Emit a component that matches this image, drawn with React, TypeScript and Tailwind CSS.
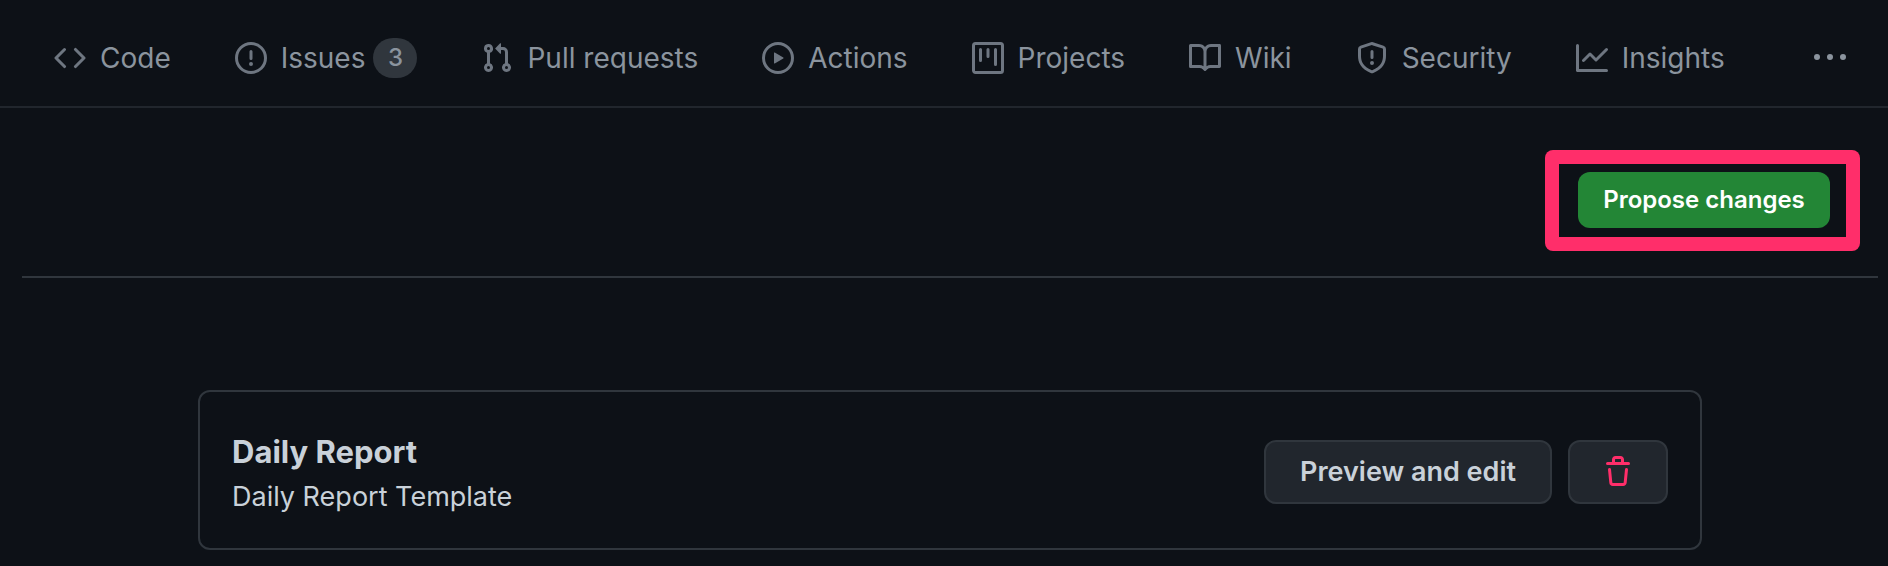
import type { ReactNode } from 'react';

interface Tab {
  label: string;
  icon: string;
  count?: number;
}

const ICONS = {
  code: 'M4.72 3.22a.75.75 0 011.06 1.06L2.06 8l3.72 3.72a.75.75 0 11-1.06 1.06L.47 8.53a.75.75 0 010-1.06l4.25-4.25zm6.56 0a.75.75 0 10-1.06 1.06L13.94 8l-3.72 3.72a.75.75 0 101.06 1.06l4.25-4.25a.75.75 0 000-1.06l-4.25-4.25z',
  issue: 'M8 1.5a6.5 6.5 0 100 13 6.5 6.5 0 000-13zM0 8a8 8 0 1116 0A8 8 0 010 8zm9 3a1 1 0 11-2 0 1 1 0 012 0zm-.25-6.25a.75.75 0 00-1.5 0v3.5a.75.75 0 001.5 0v-3.5z',
  pull: 'M7.177 3.073L9.573.677A.25.25 0 0110 .854v4.792a.25.25 0 01-.427.177L7.177 3.427a.25.25 0 010-.354zM3.75 2.5a.75.75 0 100 1.5.75.75 0 000-1.5zm-2.25.75a2.25 2.25 0 113 2.122v5.256a2.251 2.251 0 11-1.5 0V5.372A2.25 2.25 0 011.5 3.25zM11 2.5h-1V4h1a1 1 0 011 1v5.628a2.251 2.251 0 101.5 0V5A2.5 2.5 0 0011 2.5zm1 10.25a.75.75 0 111.5 0 .75.75 0 01-1.5 0zM3.75 12a.75.75 0 100 1.5.75.75 0 000-1.5z',
  play: 'M1.5 8a6.5 6.5 0 1113 0 6.5 6.5 0 01-13 0zM8 0a8 8 0 100 16A8 8 0 008 0zM6.379 5.227A.25.25 0 006 5.442v5.117a.25.25 0 00.379.214l4.264-2.559a.25.25 0 000-.428L6.379 5.227z',
  project: 'M1.75 0A1.75 1.75 0 000 1.75v12.5C0 15.216.784 16 1.75 16h12.5A1.75 1.75 0 0016 14.25V1.75A1.75 1.75 0 0014.25 0H1.75zM1.5 1.75a.25.25 0 01.25-.25h12.5a.25.25 0 01.25.25v12.5a.25.25 0 01-.25.25H1.75a.25.25 0 01-.25-.25V1.75zM11.75 3a.75.75 0 00-.75.75v7.5a.75.75 0 001.5 0v-7.5a.75.75 0 00-.75-.75zm-8.25.75a.75.75 0 011.5 0v5.5a.75.75 0 01-1.5 0v-5.5zM8 3a.75.75 0 00-.75.75v3.5a.75.75 0 001.5 0v-3.5A.75.75 0 008 3z',
  book: 'M0 1.75A.75.75 0 01.75 1h4.253c1.227 0 2.317.59 3 1.501A3.744 3.744 0 0111.006 1h4.245a.75.75 0 01.75.75v10.5a.75.75 0 01-.75.75h-4.507a2.25 2.25 0 00-1.591.659l-.622.621a.75.75 0 01-1.06 0l-.622-.621A2.25 2.25 0 005.258 13H.75a.75.75 0 01-.75-.75V1.75zm8.755 3a2.25 2.25 0 012.25-2.25H14.5v9h-3.757c-.71 0-1.4.201-1.992.572l.004-7.322zm-1.504 7.324l.004-5.073-.002-2.253A2.25 2.25 0 005.003 2.5H1.5v9h3.757a3.75 3.75 0 011.994.574z',
  shield: 'M7.467.133a1.75 1.75 0 011.066 0l5.25 1.68A1.75 1.75 0 0115 3.48V7c0 1.566-.32 3.182-1.303 4.682-.983 1.498-2.585 2.813-5.032 3.855a1.7 1.7 0 01-1.33 0c-2.447-1.042-4.049-2.357-5.032-3.855C1.32 10.182 1 8.566 1 7V3.48a1.75 1.75 0 011.217-1.667l5.25-1.68zm.61 1.429a.25.25 0 00-.153 0l-5.25 1.68a.25.25 0 00-.174.238V7c0 1.358.275 2.666 1.057 3.86.784 1.194 2.121 2.34 4.366 3.297a.2.2 0 00.154 0c2.245-.956 3.582-2.104 4.366-3.298C13.225 9.666 13.5 8.36 13.5 7V3.48a.25.25 0 00-.174-.237l-5.25-1.68zM9 10.5a1 1 0 11-2 0 1 1 0 012 0zm-.25-5.75a.75.75 0 10-1.5 0v3a.75.75 0 001.5 0v-3z',
  graph: 'M1.5 1.75a.75.75 0 00-1.5 0v12.5c0 .414.336.75.75.75h14.5a.75.75 0 000-1.5H1.5V1.75zm14.28 2.53a.75.75 0 00-1.06-1.06L10 7.94 7.53 5.47a.75.75 0 00-1.06 0L3.22 8.72a.75.75 0 001.06 1.06L7 7.06l2.47 2.47a.75.75 0 001.06 0l5.25-5.25z',
  kebab: 'M8 9a1.5 1.5 0 100-3 1.5 1.5 0 000 3zM1.5 9a1.5 1.5 0 100-3 1.5 1.5 0 000 3zm13 0a1.5 1.5 0 100-3 1.5 1.5 0 000 3z',
  trash: 'M6.5 1.75a.25.25 0 01.25-.25h2.5a.25.25 0 01.25.25V3h-3V1.75zm4.5 0V3h2.25a.75.75 0 010 1.5H2.75a.75.75 0 010-1.5H5V1.75C5 .784 5.784 0 6.75 0h2.5C10.216 0 11 .784 11 1.75zM4.496 6.675a.75.75 0 10-1.492.15l.66 6.6A1.75 1.75 0 005.405 15h5.19c.9 0 1.652-.681 1.741-1.576l.66-6.6a.75.75 0 00-1.492-.149l-.66 6.6a.25.25 0 01-.249.225h-5.19a.25.25 0 01-.249-.225l-.66-6.6z',
};

const TABS: Tab[] = [
  { label: 'Code', icon: ICONS.code },
  { label: 'Issues', icon: ICONS.issue, count: 3 },
  { label: 'Pull requests', icon: ICONS.pull },
  { label: 'Actions', icon: ICONS.play },
  { label: 'Projects', icon: ICONS.project },
  { label: 'Wiki', icon: ICONS.book },
  { label: 'Security', icon: ICONS.shield },
  { label: 'Insights', icon: ICONS.graph },
];

function Icon({ path, className }: { path: string; className?: string }) {
  return (
    <svg viewBox="0 0 16 16" fill="currentColor" fillRule="evenodd" aria-hidden="true" className={`w-8 h-8 shrink-0 ${className ?? ''}`}>
      <path d={path} />
    </svg>
  );
}

function RepoNav() {
  return (
    <nav className="flex items-center justify-between h-[108px] pt-[10px] pl-[54px] pr-[42px] border-b-2 border-[#21262d] text-[#8b949e]">
      <ul className="flex items-center gap-16">
        {TABS.map((tab) => (
          <li key={tab.label}>
            <a href="#" className="flex items-center text-[28px] leading-10 whitespace-nowrap">
              <Icon path={tab.icon} className="mr-3.5 text-[#6e7681]" />
              <span>{tab.label}</span>
              {tab.count !== undefined && (
                <span className="ml-2 w-11 h-10 rounded-full bg-[#30363d] text-2xl leading-10 font-medium text-center">{tab.count}</span>
              )}
            </a>
          </li>
        ))}
      </ul>
      <button type="button" aria-label="More">
        <Icon path={ICONS.kebab} />
      </button>
    </nav>
  );
}

function CardButton({ label, className, children }: { label?: string; className: string; children: ReactNode }) {
  return (
    <button
      type="button"
      aria-label={label}
      className={`flex items-center justify-center h-16 rounded-xl border-2 border-[#30363d] bg-[#21262d] ${className}`}
    >
      {children}
    </button>
  );
}

export default function App() {
  return (
    <div className="min-h-screen bg-[#0d1117] text-[#c9d1d9] font-['Inter',sans-serif]">
      <RepoNav />

      {/* Submit bar */}
      <div className="flex justify-end ml-[22px] mr-[10px] pt-[42px] pb-[25px] pr-[18px] border-b-2 border-[#30363d]">
        <div className="rounded-lg bg-[#ff2e6a] p-[14px]">
          <div className="bg-[#0d1117] pt-2 pb-[9px] pl-[19px] pr-4">
            <button type="button" className="flex items-center justify-center w-[252px] h-14 rounded-xl bg-[#238636] text-white text-2xl font-semibold">
              Propose changes
            </button>
          </div>
        </div>
      </div>

      {/* Template list */}
      <main className="pt-28 pb-4 pl-[198px] pr-[186px]">
        <section className="flex items-center justify-between h-40 px-8 pt-1 rounded-xl border-2 border-[#30363d]">
          <div className="pt-1">
            <h3 className="text-[31px] leading-[46px] font-bold">Daily Report</h3>
            <p className="text-[27px] leading-[44px]">Daily Report Template</p>
          </div>
          <div className="flex gap-4">
            <CardButton className="w-72 text-[27px] font-semibold">Preview and edit</CardButton>
            <CardButton label="Delete template" className="w-[100px] text-[#ff2e6a]">
              <Icon path={ICONS.trash} />
            </CardButton>
          </div>
        </section>
      </main>
    </div>
  );
}
